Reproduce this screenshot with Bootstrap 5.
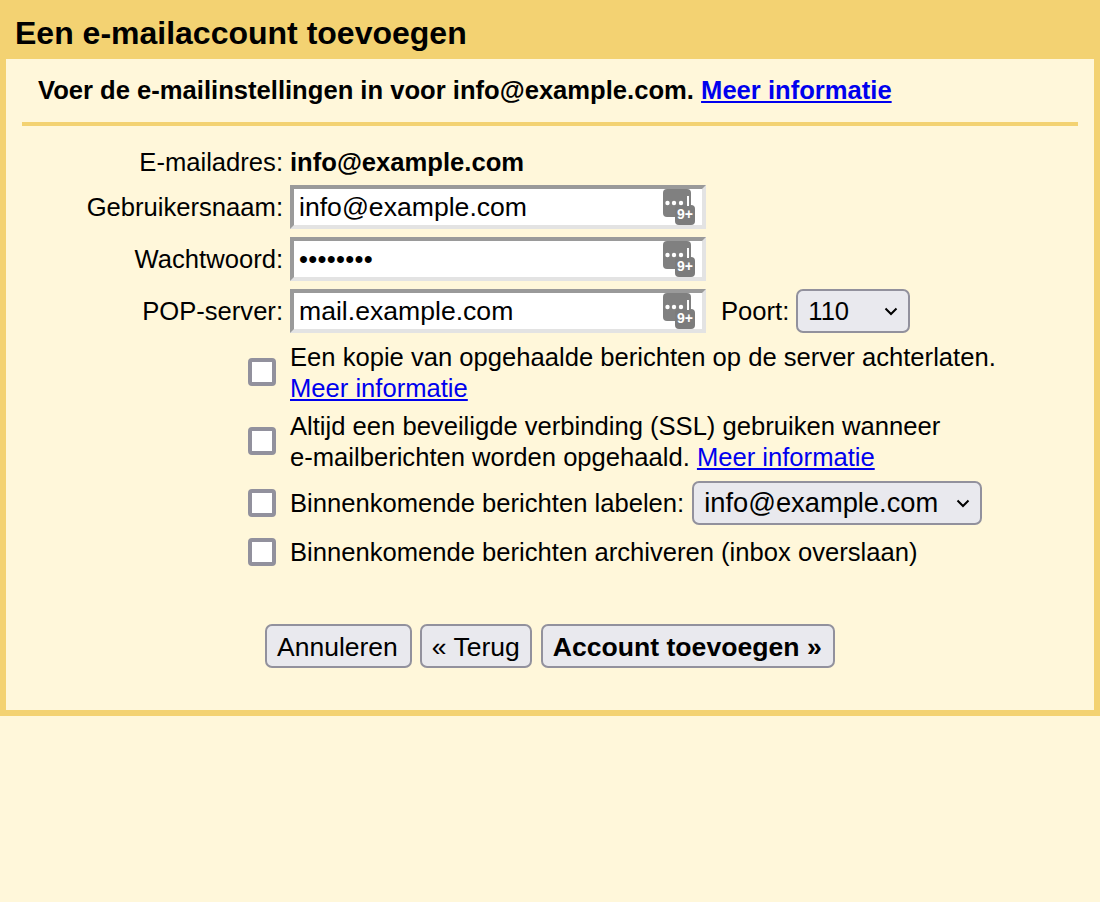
<!DOCTYPE html>
<html lang="nl">
<head>
<meta charset="utf-8">
<title>Een e-mailaccount toevoegen</title>
<link rel="stylesheet" href="https://cdn.jsdelivr.net/npm/bootstrap@5.3.0/dist/css/bootstrap.min.css">
<style>
html,body{height:100%}
body{background:#fff7da;color:#000;font-family:"Liberation Sans",Arial,sans-serif;font-size:25.6px;line-height:30px;overflow:hidden}
a{color:#0000ee}
.shell{border:6px solid #f3d272;border-top:0;height:716px;width:1100px}
.shell-title{background:#f3d272;margin:0;height:59px;padding:17px 9px 0;font-size:32px;line-height:33px;font-weight:700}
.intro{margin:0 16px;height:67px;padding:16px 16px 0;border-bottom:4px solid #f3d272;font-weight:700}
.rows{padding-top:21px}
.lbl{width:284px;padding-right:7px;text-align:right;flex:none}
.email-row{height:30px;margin-bottom:8px;align-items:center}
.field-row{height:44px;margin-bottom:8px;align-items:center}
.field{width:416px;height:44px;border:4px solid;border-color:#9a9a9a #e3e3e3 #e3e3e3 #9a9a9a;background:#fff;padding:0 0 0 5px;position:relative;display:flex;align-items:center;flex:none;font-size:26.600px}
.field-text{line-height:36px}
.dots{font-size:25.600px;letter-spacing:.3px}
.pw{position:absolute;right:7px;top:0;width:32px;height:36px}
.choice{background:#e9e9ee;border:2px solid #92919d;border-radius:7px;color:#000;line-height:26px;padding:0 10px;display:flex;align-items:center;justify-content:space-between;height:44px}
.port{width:114px;margin-left:7px}
.port-label{margin-left:15px}
.lab{width:290px;margin-left:8px;font-size:27.300px}
.chev{width:14px;height:9px;flex:none}
.checks{padding-left:242px;line-height:31px}
.box{width:28px;height:28px;border:4px solid #92919d;border-radius:4px;background:#fff;flex:none;margin-right:14px}
.check-row{align-items:center}
.c1{height:62px;margin-top:8px}
.c2{height:60px;margin-top:8px}
.c3{height:44px;margin-top:10px}
.c4{height:30px;margin-top:12px}
.two-line{padding-top:2px}
.actions{padding-left:259px;margin-top:57px;gap:8px}
.act{background:#e9e9ee;border:2px solid #92919d;border-radius:7px;color:#000;font:inherit;font-size:26.500px;height:44px;padding:1px 10px 0;line-height:40px;margin:0}
.act-cancel{padding-right:12px}
.act-main{font-weight:700;padding-right:11px;margin-left:1px;font-size:26.600px}
</style>
</head>
<body>
<div class="shell">
  <h1 class="shell-title">Een e-mailaccount toevoegen</h1>
  <div class="intro">Voer de e-mailinstellingen in voor info@example.com. <a href="#">Meer informatie</a></div>
  <div class="rows">
    <div class="d-flex email-row"><div class="lbl">E-mailadres:</div><div class="fw-bold">info@example.com</div></div>
    <div class="d-flex field-row"><div class="lbl">Gebruikersnaam:</div><div class="field"><span class="field-text">info@example.com</span>
      <svg class="pw" viewBox="0 0 32 36"><rect x="0" y="0" width="28" height="28" rx="4" fill="#808080"/><rect x="12" y="16" width="20" height="20" rx="4" fill="#7c7c7c"/><circle cx="4.500" cy="14" r="2.200" fill="#fff"/><circle cx="11" cy="14" r="2.200" fill="#fff"/><circle cx="18" cy="14" r="2.200" fill="#fff"/><rect x="24" y="7" width="2" height="10" fill="#fff"/><text x="14" y="30" font-family="Liberation Sans" font-weight="700" font-size="14" fill="#fff">9+</text></svg></div></div>
    <div class="d-flex field-row"><div class="lbl">Wachtwoord:</div><div class="field"><span class="field-text dots">••••••••</span>
      <svg class="pw" viewBox="0 0 32 36"><rect x="0" y="0" width="28" height="28" rx="4" fill="#808080"/><rect x="12" y="16" width="20" height="20" rx="4" fill="#7c7c7c"/><circle cx="4.500" cy="14" r="2.200" fill="#fff"/><circle cx="11" cy="14" r="2.200" fill="#fff"/><circle cx="18" cy="14" r="2.200" fill="#fff"/><rect x="24" y="7" width="2" height="10" fill="#fff"/><text x="14" y="30" font-family="Liberation Sans" font-weight="700" font-size="14" fill="#fff">9+</text></svg></div></div>
    <div class="d-flex field-row mb-0"><div class="lbl">POP-server:</div><div class="field"><span class="field-text">mail.example.com</span>
      <svg class="pw" viewBox="0 0 32 36"><rect x="0" y="0" width="28" height="28" rx="4" fill="#808080"/><rect x="12" y="16" width="20" height="20" rx="4" fill="#7c7c7c"/><circle cx="4.500" cy="14" r="2.200" fill="#fff"/><circle cx="11" cy="14" r="2.200" fill="#fff"/><circle cx="18" cy="14" r="2.200" fill="#fff"/><rect x="24" y="7" width="2" height="10" fill="#fff"/><text x="14" y="30" font-family="Liberation Sans" font-weight="700" font-size="14" fill="#fff">9+</text></svg></div>
      <span class="port-label">Poort:</span>
      <div class="choice port"><span>110</span><svg class="chev" viewBox="0 0 14 9"><path d="M1.500 1.500 7 7l5.500-5.500" fill="none" stroke="#000" stroke-width="2"/></svg></div></div>
    <div class="checks">
      <div class="d-flex check-row c1"><div class="box"></div><div class="two-line">Een kopie van opgehaalde berichten op de server achterlaten.<br><a href="#">Meer informatie</a></div></div>
      <div class="d-flex check-row c2"><div class="box"></div><div class="two-line">Altijd een beveiligde verbinding (SSL) gebruiken wanneer<br>e-mailberichten worden opgehaald. <a href="#">Meer informatie</a></div></div>
      <div class="d-flex check-row c3"><div class="box"></div><div>Binnenkomende berichten labelen:</div><div class="choice lab"><span>info@example.com</span><svg class="chev" viewBox="0 0 14 9"><path d="M1.500 1.500 7 7l5.500-5.500" fill="none" stroke="#000" stroke-width="2"/></svg></div></div>
      <div class="d-flex check-row c4"><div class="box"></div><div>Binnenkomende berichten archiveren (inbox overslaan)</div></div>
    </div>
    <div class="d-flex actions">
      <button class="act act-cancel" type="button">Annuleren</button>
      <button class="act" type="button">« Terug</button>
      <button class="act act-main" type="button">Account toevoegen »</button>
    </div>
  </div>
</div>
<script src="https://cdn.jsdelivr.net/npm/bootstrap@5.3.0/dist/js/bootstrap.bundle.min.js"></script>
</body>
</html>
